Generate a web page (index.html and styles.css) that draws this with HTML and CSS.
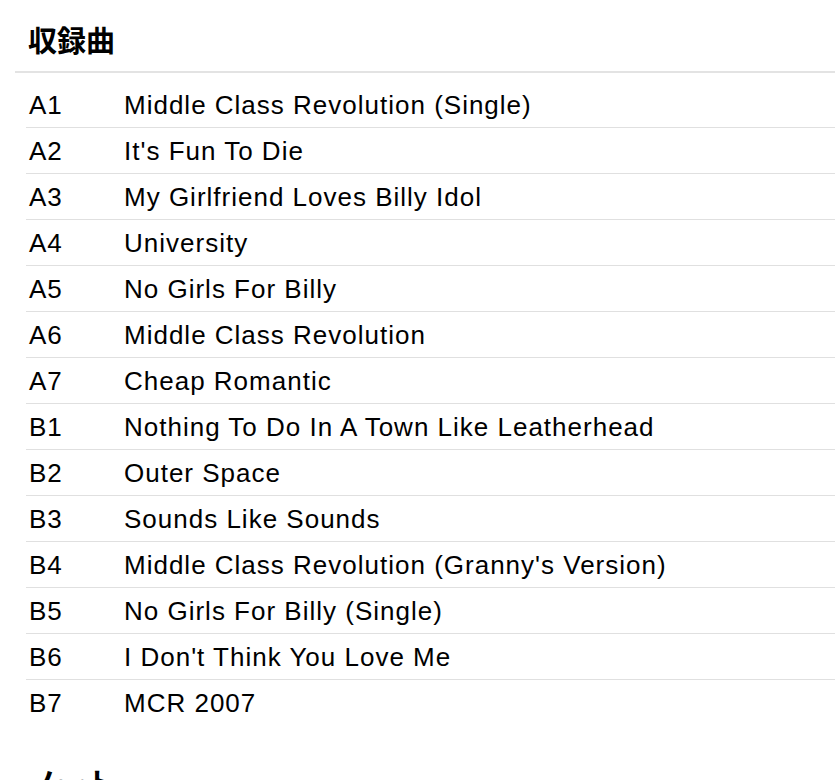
FILE: index.html
```html
<!DOCTYPE html>
<html lang="ja">
<head>
<meta charset="utf-8">
<title>収録曲</title>
<link rel="stylesheet" href="styles.css">
</head>
<body>
<div class="page">
  <section class="tracklist">
    <h2 class="heading">収録曲</h2>
    <ul class="tracks">
      <li class="track"><span class="pos">A1</span><span class="title">Middle Class Revolution (Single)</span></li>
      <li class="track"><span class="pos">A2</span><span class="title">It's Fun To Die</span></li>
      <li class="track"><span class="pos">A3</span><span class="title">My Girlfriend Loves Billy Idol</span></li>
      <li class="track"><span class="pos">A4</span><span class="title">University</span></li>
      <li class="track"><span class="pos">A5</span><span class="title">No Girls For Billy</span></li>
      <li class="track"><span class="pos">A6</span><span class="title">Middle Class Revolution</span></li>
      <li class="track"><span class="pos">A7</span><span class="title">Cheap Romantic</span></li>
      <li class="track"><span class="pos">B1</span><span class="title">Nothing To Do In A Town Like Leatherhead</span></li>
      <li class="track"><span class="pos">B2</span><span class="title">Outer Space</span></li>
      <li class="track"><span class="pos">B3</span><span class="title">Sounds Like Sounds</span></li>
      <li class="track"><span class="pos">B4</span><span class="title">Middle Class Revolution (Granny's Version)</span></li>
      <li class="track"><span class="pos">B5</span><span class="title">No Girls For Billy (Single)</span></li>
      <li class="track"><span class="pos">B6</span><span class="title">I Don't Think You Love Me</span></li>
      <li class="track"><span class="pos">B7</span><span class="title">MCR 2007</span></li>
    </ul>
  </section>
  <section class="notes">
    <h2 class="heading heading-plain">ノート</h2>
  </section>
</div>
</body>
</html>
```

FILE: styles.css
```css
html, body {
  margin: 0;
  padding: 0;
  background: #fff;
}

body {
  font-family: "Liberation Sans", Arial, "Noto Sans CJK JP", sans-serif;
  color: #000;
}

.page {
  padding-left: 15px;
}

.heading {
  margin: 0;
  padding: 22px 13px 15px;
  font-family: "Noto Sans CJK JP", sans-serif;
  font-size: 29px;
  line-height: 34px;
  font-weight: 700;
  border-bottom: 2px solid #e3e3e3;
}

.heading-plain {
  border-bottom: none;
  padding-top: 39px;
}

.tracks {
  list-style: none;
  margin: 9px 0 0 11px;
  padding: 0;
}

.track {
  display: grid;
  grid-template-columns: 95px 1fr;
  align-items: center;
  height: 43px;
  padding: 2px 0 0 3px;
  font-size: 26px;
  letter-spacing: 1px;
  border-bottom: 1px solid #e0e0e0;
}

.track:last-child {
  border-bottom: none;
}
```
